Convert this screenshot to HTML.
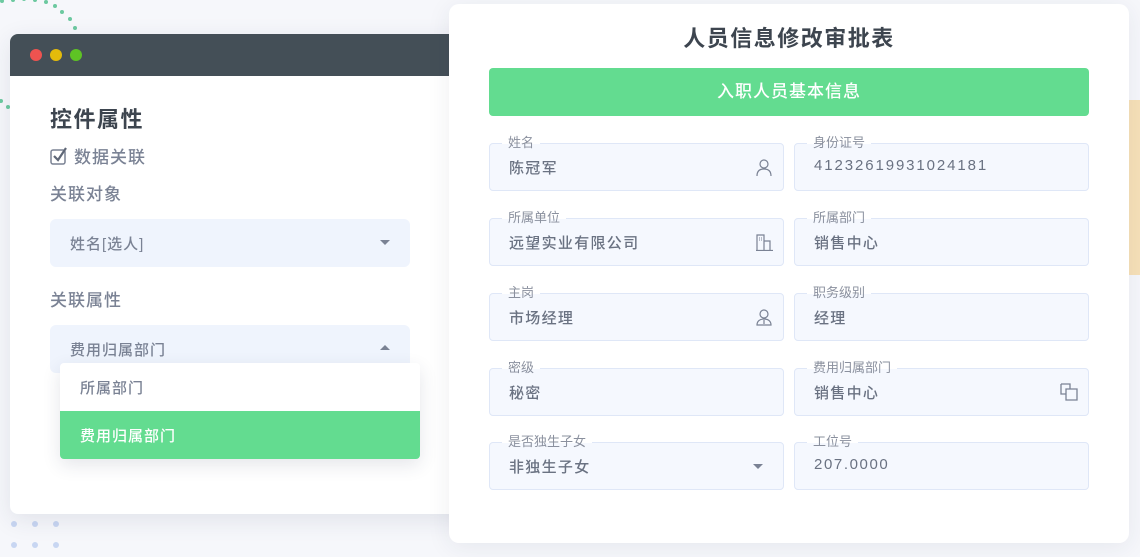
<!DOCTYPE html>
<html><head><meta charset="utf-8"><style>
*{box-sizing:border-box;margin:0;padding:0}
body{width:1140px;height:557px;overflow:hidden;background:#f6f7fb;font-family:"Liberation Sans","Noto Sans CJK SC",sans-serif;position:relative;color:#7a8294}
.abs{position:absolute}
.win{left:10px;top:34px;width:460px;height:480px;background:#fff;border-radius:8px;box-shadow:0 6px 24px rgba(40,50,80,.1);overflow:hidden}
.bar{height:42px;background:#444f57;position:relative}
.dot{position:absolute;top:15px;width:12px;height:12px;border-radius:50%}
.panel{left:449px;top:4px;width:680px;height:539px;background:#fff;border-radius:10px;box-shadow:0 4px 24px rgba(40,50,80,.08)}
.f{position:absolute;width:295px;height:48px;background:#f5f8fe;border:1px solid #dfe7f7;border-radius:4px}
.f .l{position:absolute;left:12px;top:-9px;font-size:13px;line-height:16px;color:#8a909e;background:linear-gradient(#fff 55%,#f5f8fe 55%);padding:0 6px;}
.f .v{position:absolute;left:19px;top:13px;font-size:15px;color:#6a7282;letter-spacing:1.3px;font-weight:500}
.f svg{position:absolute;right:10px;top:14px}
.sel{position:absolute;left:40px;width:360px;height:48px;background:#eff4fd;border-radius:6px;font-size:15px;color:#7a8294;padding:14px 20px;letter-spacing:1px;font-weight:500}
.tri{position:absolute;right:20px;top:21px;width:0;height:0;border-left:5px solid transparent;border-right:5px solid transparent}
</style></head><body>
<svg class="abs" style="left:0;top:0" width="90" height="110">
<g fill="#6cc9a0"><circle cx="2" cy="1" r="2"/><circle cx="13" cy="0" r="2"/><circle cx="24" cy="-1" r="2"/><circle cx="35" cy="0" r="2"/><circle cx="46" cy="2" r="2"/><circle cx="55" cy="6" r="2"/><circle cx="62" cy="12" r="2"/><circle cx="70" cy="19" r="2"/><circle cx="75" cy="28" r="2"/><circle cx="1" cy="101" r="2"/><circle cx="8" cy="107" r="2"/></g></svg>
<svg class="abs" style="left:0;top:515px" width="70" height="42"><g fill="#c8d6f2"><circle cx="14" cy="9" r="3"/><circle cx="35" cy="9" r="3"/><circle cx="56" cy="9" r="3"/><circle cx="14" cy="30" r="3"/><circle cx="35" cy="30" r="3"/><circle cx="56" cy="30" r="3"/></g></svg>
<div class="abs" style="left:1129px;top:100px;width:11px;height:175px;background:#f7e1b8"></div>
<div class="win abs">
<div class="bar"><div class="dot" style="left:20px;background:#ee5350"></div><div class="dot" style="left:40px;background:#e3bb0b"></div><div class="dot" style="left:60px;background:#5ec324"></div></div>
<div class="abs" style="left:40px;top:68px;font-size:22px;font-weight:bold;color:#3d454f;letter-spacing:1.5px">控件属性</div>
<div class="abs" style="left:40px;top:109px;font-size:17px;color:#7a8294;letter-spacing:1px;font-weight:500"><svg width="18" height="18" style="vertical-align:-2px;margin-right:6px" viewBox="0 0 18 18"><rect x="1" y="3" width="14" height="14" rx="2" fill="none" stroke="#7a8294" stroke-width="1.5"/><path d="M4 9l4 4 8-12" fill="none" stroke="#5f6777" stroke-width="2.2"/></svg>数据关联</div>
<div class="abs" style="left:40px;top:146px;font-size:17px;letter-spacing:1px;font-weight:500">关联对象</div>
<div class="sel" style="top:185px">姓名[选人]<div class="tri" style="border-top:5px solid #7a8294"></div></div>
<div class="abs" style="left:40px;top:252px;font-size:17px;letter-spacing:1px;font-weight:500">关联属性</div>
<div class="sel" style="top:291px">费用归属部门<div class="tri" style="border-bottom:5px solid #7a8294;top:20px"></div></div>
<div class="abs" style="left:50px;top:329px;width:360px;height:96px;background:#fff;border-radius:4px;box-shadow:0 6px 18px rgba(40,50,80,.12);overflow:hidden">
<div style="height:48px;padding:14px 20px;font-size:15px;letter-spacing:1px;font-weight:500">所属部门</div>
<div style="height:48px;padding:14px 20px;font-size:15px;letter-spacing:1px;background:#63dc90;color:#fff;font-weight:500">费用归属部门</div></div>
</div>
<div class="panel abs">
<div class="abs" style="left:0;width:680px;top:17px;text-align:center;font-size:22px;font-weight:bold;color:#3d454f;letter-spacing:1.5px">人员信息修改审批表</div>
<div class="abs" style="left:40px;top:64px;width:600px;height:48px;background:#63dc90;border-radius:4px;color:#fff;text-align:center;line-height:48px;font-size:17px;letter-spacing:1px;font-weight:500">入职人员基本信息</div>
</div>
<div class="f" style="left:489px;top:143px"><span class="l">姓名</span><span class="v">陈冠军</span><svg width="18" height="18" viewBox="0 0 18 18" fill="none" stroke="#7a8294" stroke-width="1.2"><circle cx="9" cy="6" r="4"/><path d="M2 18c0-5 3-7 7-7s7 2 7 7"/></svg></div>
<div class="f" style="left:794px;top:143px"><span class="l">身份证号</span><span class="v" style="letter-spacing:1.9px">41232619931024181</span></div>
<div class="f" style="left:489px;top:218px"><span class="l">所属单位</span><span class="v">远望实业有限公司</span><svg width="18" height="18" viewBox="0 0 18 18" fill="none" stroke="#7a8294" stroke-width="1.2"><path d="M1 17.5h17M2 17V2h7v15M9 8h6v9"/><path d="M4 5h1M6 5h1M4 7h1M6 7h1" stroke-width="1"/></svg></div>
<div class="f" style="left:794px;top:218px"><span class="l">所属部门</span><span class="v">销售中心</span></div>
<div class="f" style="left:489px;top:293px"><span class="l">主岗</span><span class="v">市场经理</span><svg width="18" height="18" viewBox="0 0 18 18" fill="none" stroke="#7a8294" stroke-width="1.2"><circle cx="9" cy="6" r="4"/><path d="M2 17c0-4 3-6 7-6s7 2 7 6zM9 12v4"/></svg></div>
<div class="f" style="left:794px;top:293px"><span class="l">职务级别</span><span class="v">经理</span></div>
<div class="f" style="left:489px;top:368px"><span class="l">密级</span><span class="v">秘密</span></div>
<div class="f" style="left:794px;top:368px"><span class="l">费用归属部门</span><span class="v">销售中心</span><svg width="18" height="18" viewBox="0 0 18 18" fill="none" stroke="#7a8294" stroke-width="1.3"><path d="M1 1h9v5M6 11H1V1M6 6h11v11H6z"/></svg></div>
<div class="f" style="left:489px;top:442px"><span class="l">是否独生子女</span><span class="v">非独生子女</span><div class="tri" style="border-top:5px solid #7a8294;top:21px"></div></div>
<div class="f" style="left:794px;top:442px"><span class="l">工位号</span><span class="v" style="letter-spacing:1.6px">207.0000</span></div>
</body></html>
